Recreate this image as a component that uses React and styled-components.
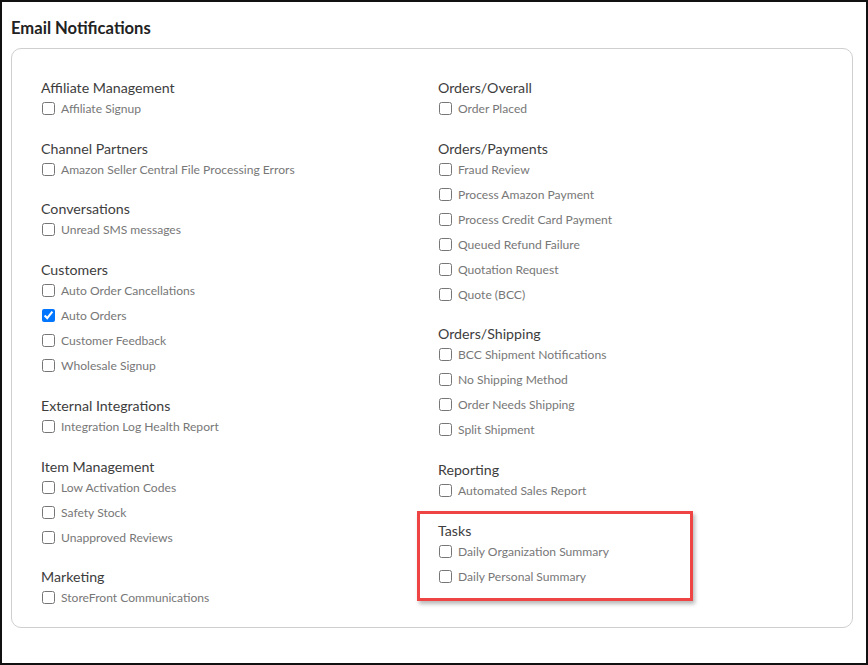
import React from "react";
import styled, { createGlobalStyle } from "styled-components";

const GlobalStyle = createGlobalStyle`
  html, body { margin: 0; padding: 0; background: #fff; }
  body { font-family: Lato, "Open Sans", "Liberation Sans", sans-serif; }
`;

const Frame = styled.div`
  box-sizing: border-box;
  width: 868px;
  height: 665px;
  border: 2px solid #111;
  padding: 16px 15px 0 9px;
  background: #fff;
`;

const Title = styled.h2`
  margin: 0 0 10px 0;
  font-size: 16.6px;
  line-height: 20px;
  font-weight: 700;
  color: #222;
`;

const Card = styled.div`
  box-sizing: border-box;
  width: 842px;
  border: 1px solid #cfcfcf;
  border-radius: 10px;
  padding: 29px 29px 19px 29px;
  display: grid;
  grid-template-columns: 397px 1fr;
  align-items: start;
`;

const Column = styled.div`
  display: flex;
  flex-direction: column;
  gap: 20.35px;
`;

const Group = styled.div`
  position: relative;
  display: flex;
  flex-direction: column;

  ${(p) =>
    p.$highlight &&
    `
    &::after {
      content: "";
      position: absolute;
      left: -21px;
      top: -10px;
      width: 276px;
      bottom: -15px;
      box-sizing: border-box;
      border: 3px solid #ef4444;
      box-shadow: 2px 3px 4px rgba(0, 0, 0, 0.28);
      pointer-events: none;
    }
  `}
`;

const Heading = styled.div`
  font-size: 14.2px;
  line-height: 20px;
  color: #3d3d3d;
`;

const Items = styled.div`
  display: flex;
  flex-direction: column;
  gap: 5px;
  margin-top: 0.4px;
`;

const Item = styled.label`
  display: flex;
  align-items: center;
  height: 20px;
  font-size: 12.1px;
  color: #777;
`;

const Box = styled.input.attrs({ type: "checkbox" })`
  width: 13px;
  height: 13px;
  margin: 0 6px 0 1px;
  accent-color: #0075ff;
`;

const left = [
  ["Affiliate Management", ["Affiliate Signup"]],
  ["Channel Partners", ["Amazon Seller Central File Processing Errors"]],
  ["Conversations", ["Unread SMS messages"]],
  ["Customers", ["Auto Order Cancellations", "Auto Orders", "Customer Feedback", "Wholesale Signup"]],
  ["External Integrations", ["Integration Log Health Report"]],
  ["Item Management", ["Low Activation Codes", "Safety Stock", "Unapproved Reviews"]],
  ["Marketing", ["StoreFront Communications"]],
];

const right = [
  ["Orders/Overall", ["Order Placed"]],
  [
    "Orders/Payments",
    [
      "Fraud Review",
      "Process Amazon Payment",
      "Process Credit Card Payment",
      "Queued Refund Failure",
      "Quotation Request",
      "Quote (BCC)",
    ],
  ],
  ["Orders/Shipping", ["BCC Shipment Notifications", "No Shipping Method", "Order Needs Shipping", "Split Shipment"]],
  ["Reporting", ["Automated Sales Report"]],
  ["Tasks", ["Daily Organization Summary", "Daily Personal Summary"]],
];

const checked = ["Auto Orders"];

const renderColumn = (groups) => (
  <Column>
    {groups.map(([name, items]) => (
      <Group key={name} $highlight={name === "Tasks"}>
        <Heading>{name}</Heading>
        <Items>
          {items.map((it) => (
            <Item key={it}>
              <Box defaultChecked={checked.includes(it)} />
              {it}
            </Item>
          ))}
        </Items>
      </Group>
    ))}
  </Column>
);

export default function App() {
  return (
    <>
      <GlobalStyle />
      <Frame>
        <Title>Email Notifications</Title>
        <Card>
          {renderColumn(left)}
          {renderColumn(right)}
        </Card>
      </Frame>
    </>
  );
}
